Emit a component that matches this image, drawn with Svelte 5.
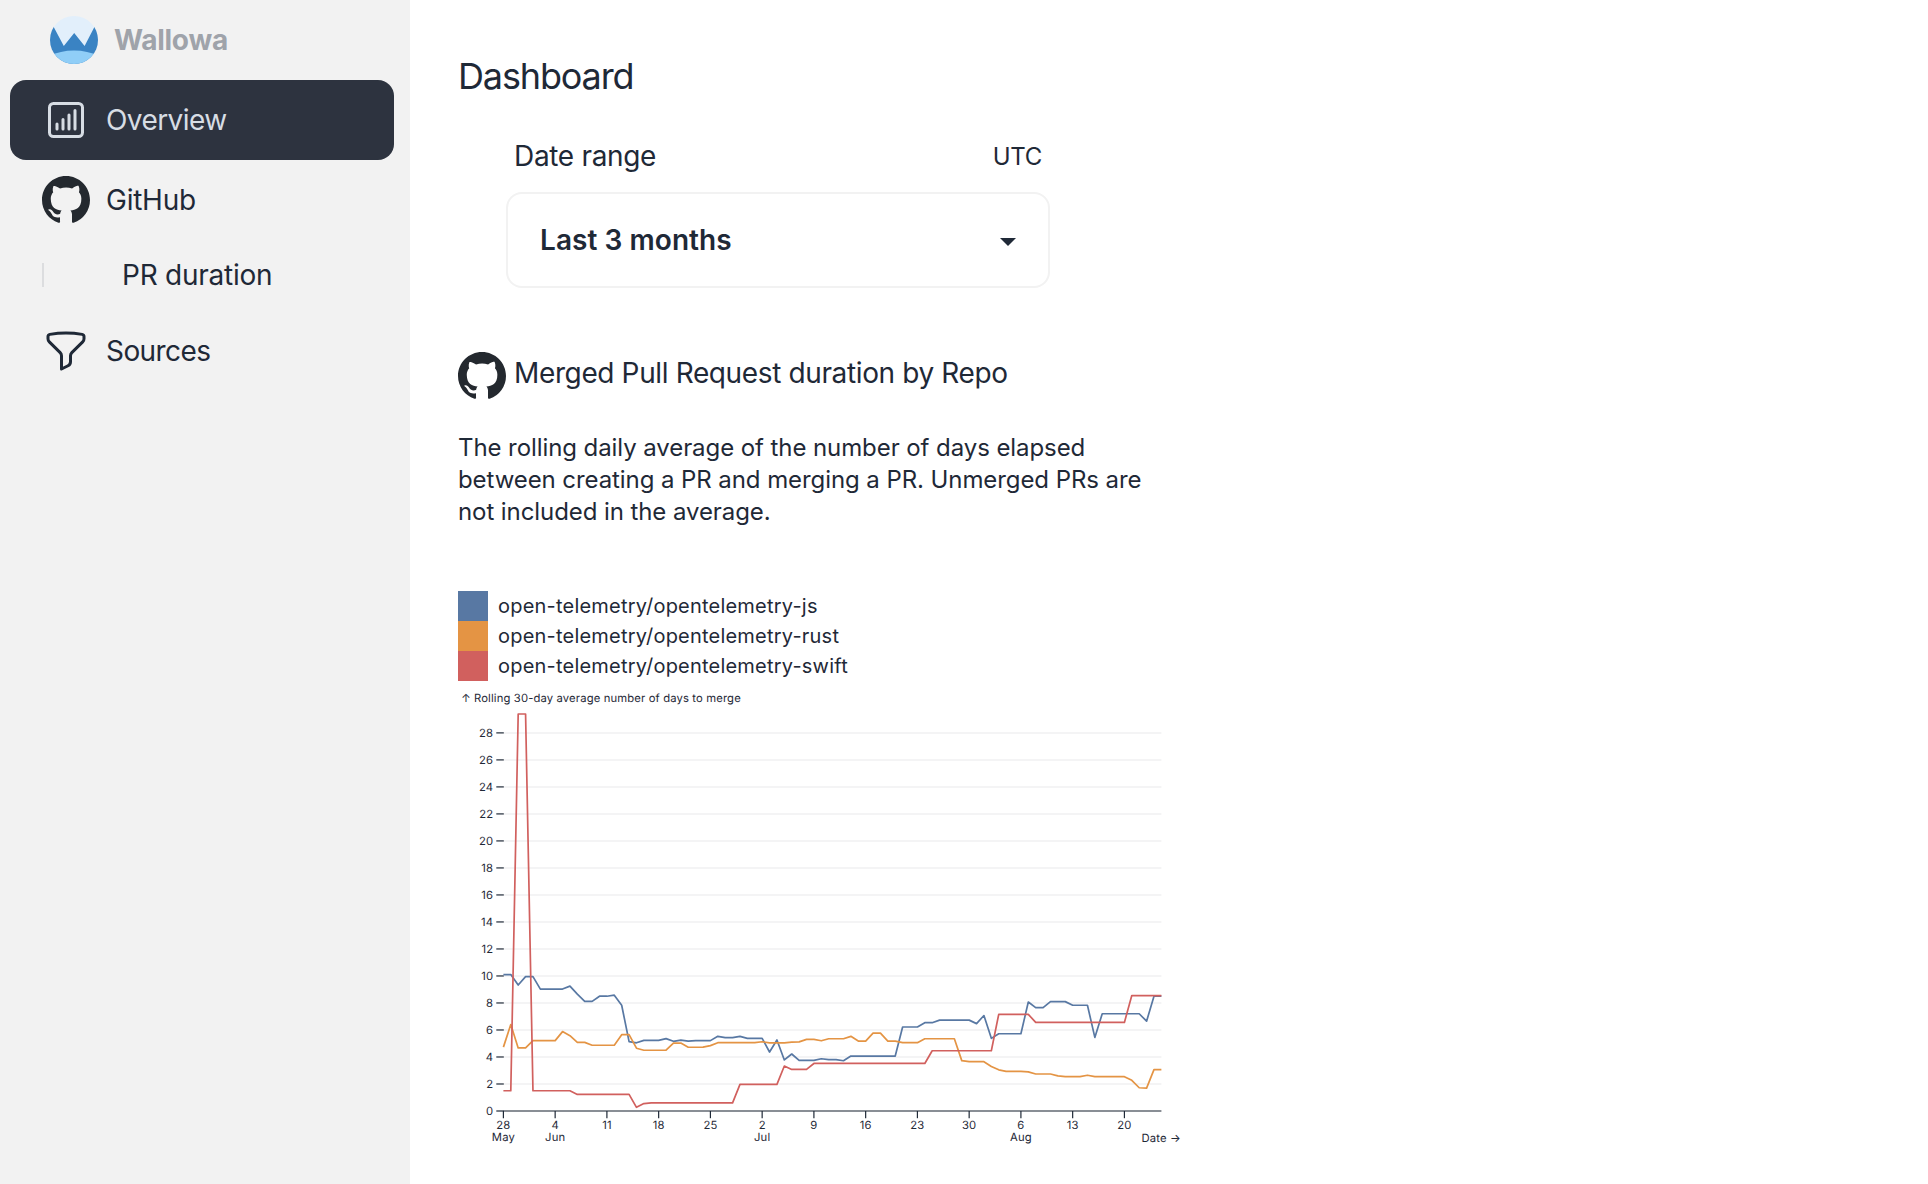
<script>
  // Runs of [number of days, value] for each series, one value per day.
  const expand = (runs) => runs.flatMap(([n, v]) => Array(n).fill(v));

  const series = [
    {
      name: 'open-telemetry/opentelemetry-js',
      tone: 'blue',
      values: expand([
        [2, 10.1], [1, 9.33], [2, 9.95], [4, 9.03], [1, 9.25], [1, 8.65], [2, 8.12], [2, 8.5], [1, 8.58],
        [1, 7.83], [1, 5.14], [1, 5.05], [3, 5.23], [1, 5.36], [1, 5.16], [1, 5.25], [1, 5.18], [3, 5.21],
        [1, 5.53], [2, 5.43], [1, 5.53], [3, 5.38], [1, 4.37], [1, 5.26], [1, 3.78], [1, 4.22], [3, 3.75],
        [1, 3.87], [2, 3.8], [1, 3.72], [7, 4.07], [3, 6.22], [2, 6.54], [5, 6.73], [1, 6.47], [1, 7.07],
        [1, 5.38], [4, 5.72], [1, 8.07], [2, 7.65], [3, 8.1], [3, 7.83], [1, 5.45], [6, 7.2], [1, 6.65],
        [2, 8.5]
      ])
    },
    {
      name: 'open-telemetry/opentelemetry-rust',
      tone: 'orange',
      values: expand([
        [1, 4.73], [1, 6.4], [2, 4.67], [4, 5.21], [1, 5.88], [1, 5.58], [2, 5.08], [4, 4.87], [2, 5.65],
        [1, 4.65], [4, 4.5], [2, 5.03], [2, 4.72], [1, 4.73], [1, 4.84], [6, 5.06], [1, 5.13], [3, 5.04],
        [1, 5.1], [1, 5.12], [2, 5.3], [1, 5.2], [3, 5.35], [1, 5.53], [2, 5.18], [2, 5.77], [2, 5.18],
        [3, 5.06], [5, 5.35], [1, 3.73], [3, 3.65], [1, 3.3], [1, 3.05], [3, 2.93], [1, 2.9], [3, 2.74],
        [1, 2.6], [3, 2.54], [1, 2.65], [5, 2.54], [1, 2.27], [1, 1.72], [1, 1.69], [2, 3.06]
      ])
    },
    {
      name: 'open-telemetry/opentelemetry-swift',
      tone: 'red',
      values: expand([
        [2, 1.5], [2, 29.4], [6, 1.5], [8, 1.23], [1, 0.27], [1, 0.55], [12, 0.6], [6, 1.97], [1, 3.33],
        [3, 3.08], [16, 3.52], [9, 4.46], [5, 7.16], [13, 6.56], [5, 8.55]
      ])
    }
  ];

  const x = (day) => 45.4 + day * 7.393;
  const y = (value) => 421 - value * 13.504;
  const path = (values) => 'M' + values.map((v, d) => `${x(d).toFixed(2)},${y(v).toFixed(2)}`).join('L');

  const yTicks = Array.from({ length: 15 }, (_, i) => i * 2);
  const xTicks = [
    ['28', 'May'], ['4', 'Jun'], ['11'], ['18'], ['25'], ['2', 'Jul'], ['9'],
    ['16'], ['23'], ['30'], ['6', 'Aug'], ['13'], ['20']
  ];
</script>

{#snippet github()}
  <svg class="github" viewBox="0 0 16 16" aria-hidden="true">
    <path d="M8 0C3.58 0 0 3.58 0 8c0 3.54 2.29 6.53 5.47 7.59.4.07.55-.17.55-.38 0-.19-.01-.82-.01-1.49-2.01.37-2.53-.49-2.69-.94-.09-.23-.48-.94-.82-1.13-.28-.15-.68-.52-.01-.53.63-.01 1.08.58 1.23.82.72 1.21 1.87.87 2.33.66.07-.52.28-.87.51-1.07-1.78-.2-3.64-.89-3.64-3.95 0-.87.31-1.59.82-2.15-.08-.2-.36-1.02.08-2.12 0 0 .67-.21 2.2.82.64-.18 1.32-.27 2-.27s1.36.09 2 .27c1.53-1.04 2.2-.82 2.2-.82.44 1.1.16 1.92.08 2.12.51.56.82 1.27.82 2.15 0 3.07-1.87 3.75-3.65 3.95.29.25.54.73.54 1.48 0 1.07-.01 1.93-.01 2.2 0 .21.15.46.55.38A8.01 8.01 0 0 0 16 8c0-4.42-3.58-8-8-8z" />
  </svg>
{/snippet}

<div class="app">
  <nav class="sidebar">
    <div class="brand">
      <svg class="logo" viewBox="0 0 48 48" aria-hidden="true">
        <clipPath id="disc"><circle cx="24" cy="24" r="24" /></clipPath>
        <g clip-path="url(#disc)">
          <rect width="48" height="48" fill="#e2effb" />
          <path d="M0 4L13.8 30L24.2 17L34.6 30L48 4V48H0Z" fill="#3a83c3" />
          <ellipse cx="24" cy="52" rx="34" ry="17.4" fill="#90cef7" />
        </g>
      </svg>
      <span>Wallowa</span>
    </div>
    <a class="item active" href="#overview">
      <svg class="icon" viewBox="0 0 24 24" aria-hidden="true">
        <rect x="3.75" y="3.75" width="16.5" height="16.5" rx="2" />
        <path d="M7.5 14v2.5M10.5 11.75v4.75M13.5 9.5v7M16.5 7.25v9.25" />
      </svg>
      <span class="tight">Overview</span>
    </a>
    <a class="item" href="#github">{@render github()}<span>GitHub</span></a>
    <div class="child"><a href="#pr-duration">PR duration</a></div>
    <a class="item" href="#sources">
      <svg class="icon" viewBox="0 0 24 24" aria-hidden="true">
        <path d="M12 3c2.755 0 5.455.232 8.083.678.533.09.917.556.917 1.096v1.044a2.25 2.25 0 0 1-.659 1.591l-5.432 5.432a2.25 2.25 0 0 0-.659 1.591v2.927a2.25 2.25 0 0 1-1.244 2.013L9.75 21v-6.568a2.25 2.25 0 0 0-.659-1.591L3.659 7.409A2.25 2.25 0 0 1 3 5.818V4.774c0-.54.384-1.006.917-1.096A48.32 48.32 0 0 1 12 3Z" />
      </svg>
      <span class="tight">Sources</span>
    </a>
  </nav>

  <main>
    <h1>Dashboard</h1>

    <div class="range">
      <div class="range-label"><span>Date range</span><span class="zone">UTC</span></div>
      <button class="select">
        Last 3 months
        <svg class="caret" viewBox="0 0 16 8" aria-hidden="true"><path d="M0 0H16L8 8Z" /></svg>
      </button>
    </div>

    <h2>{@render github()}<span>Merged Pull Request duration by Repo</span></h2>
    <p>
      The rolling daily average of the number of days elapsed<br />
      between creating a PR and merging a PR. Unmerged PRs are<br />
      not included in the average.
    </p>

    <ul class="legend">
      {#each series as s}
        <li><i class={s.tone}></i>{s.name}</li>
      {/each}
    </ul>

    <svg class="chart" width="750" height="460" viewBox="0 0 750 460">
      <text x="3.2" y="12">↑ Rolling 30-day average number of days to merge</text>
      {#each yTicks as t}
        <line class="grid" x1="45.4" x2="703.4" y1={y(t)} y2={y(t)} />
        <line class="tick" x1="38.3" x2="45.8" y1={y(t)} y2={y(t)} />
        <text class="end" x="35.2" y={y(t) + 4}>{t}</text>
      {/each}
      {#each xTicks as [day, month], i}
        <line class="tick" x1={x(i * 7)} x2={x(i * 7)} y1="421" y2="428.2" />
        <text class="mid" x={x(i * 7)} y="439.2">{day}</text>
        {#if month}<text class="mid" x={x(i * 7)} y="451.3">{month}</text>{/if}
      {/each}
      <line class="axis" x1="45.4" x2="703.4" y1="421" y2="421" />
      <text class="end" x="722.8" y="452.2">Date →</text>
      {#each series as s}
        <path class="line {s.tone}" d={path(s.values)} />
      {/each}
    </svg>
  </main>
</div>

<style>
  :global(body) {
    margin: 0;
    background: #fff;
  }
  .app {
    display: flex;
    height: 1184px;
    overflow: hidden;
    font-family: Inter, 'Liberation Sans', sans-serif;
    font-size: 28px;
    letter-spacing: -0.25px;
    color: #1f2937;
  }
  .sidebar {
    box-sizing: border-box;
    flex: 0 0 410px;
    padding: 0 16px 0 10px;
    background: #f2f2f2;
  }
  .brand {
    display: flex;
    align-items: center;
    gap: 16px;
    height: 80px;
    padding-left: 40px;
    font-weight: 700;
    color: #9fa3aa;
  }
  .logo,
  .github,
  .icon {
    display: block;
    flex: none;
    width: 48px;
    height: 48px;
  }
  .github {
    fill: #24292f;
  }
  .icon {
    fill: none;
    stroke: currentColor;
    stroke-width: 1.5;
    stroke-linecap: round;
    stroke-linejoin: round;
  }
  .item {
    display: flex;
    align-items: center;
    gap: 16px;
    height: 80px;
    padding-left: 32px;
    border-radius: 16px;
    color: inherit;
    text-decoration: none;
  }
  .tight {
    letter-spacing: -0.58px;
  }
  .active {
    background: #2d333f;
    color: #d7dde4;
  }
  .child {
    display: flex;
    align-items: center;
    height: 24px;
    margin: 23px 0 24px 32px;
    padding-left: 78px;
    border-left: 2px solid #dcdddf;
  }
  .child a {
    color: inherit;
    text-decoration: none;
  }
  main {
    flex: 1;
    padding: 56px 0 0 48px;
  }
  h1 {
    margin: 0;
    font-size: 36px;
    font-weight: 400;
    line-height: 40px;
    letter-spacing: -1.15px;
  }
  .range {
    width: 544px;
    margin: 24px 0 0 48px;
  }
  .range-label {
    display: flex;
    align-items: center;
    justify-content: space-between;
    height: 72px;
    padding: 0 8px;
    letter-spacing: -0.32px;
  }
  .zone {
    font-size: 24px;
  }
  .select {
    display: flex;
    align-items: center;
    justify-content: space-between;
    box-sizing: border-box;
    width: 544px;
    height: 96px;
    padding: 0 32px;
    border: 2px solid #f2f2f2;
    border-radius: 16px;
    background: #fff;
    font: inherit;
    font-weight: 600;
    letter-spacing: 0.06px;
    color: inherit;
  }
  .caret {
    width: 16px;
    height: 8px;
    margin-top: 4px;
    fill: #1f2937;
  }
  h2 {
    display: flex;
    gap: 8px;
    margin: 64px 0 0;
    font-size: 28px;
    font-weight: 400;
    line-height: 42px;
    letter-spacing: -0.37px;
  }
  p {
    margin: 32px 0 0;
    font-size: 24px;
    line-height: 32px;
    letter-spacing: -0.08px;
    white-space: nowrap;
  }
  .legend {
    margin: 63px 0 0;
    padding: 0;
    list-style: none;
    font-size: 20px;
    letter-spacing: 0.21px;
  }
  .legend li {
    display: flex;
    align-items: center;
    gap: 10px;
    height: 30px;
  }
  .legend i {
    width: 30px;
    height: 30px;
  }
  .chart {
    display: block;
    margin-top: 9px;
    font-size: 11.25px;
    letter-spacing: 0.14px;
    fill: #1f2937;
    text-rendering: geometricPrecision;
  }
  .end {
    text-anchor: end;
  }
  .mid {
    text-anchor: middle;
  }
  .grid {
    stroke: #f1f1f2;
    stroke-width: 1.5;
  }
  .tick {
    stroke: #1f2937;
    stroke-width: 1.2;
  }
  .axis {
    stroke: #1f2937;
    stroke-width: 1.2;
  }
  .line {
    fill: none;
    stroke-width: 1.7;
    stroke-linejoin: round;
  }
  i.blue { background: #5878a3; }
  i.orange { background: #e49444; }
  i.red { background: #d1605e; }
  .line.blue { stroke: #5878a3; }
  .line.orange { stroke: #e49444; }
  .line.red { stroke: #d1605e; }
</style>
